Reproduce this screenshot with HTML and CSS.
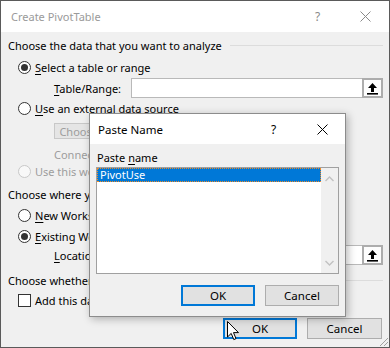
FILE: index.html
```html
<!DOCTYPE html>
<html>
	<head>
		<meta charset="utf-8">
		<title>Create PivotTable</title>
		<link rel="stylesheet" href="styles.css">
	</head>
	<body>
		<div class="window">
			<div class="titlebar">
				<span class="title">Create PivotTable</span>
				<span class="tb-help">?</span>
				<svg class="tb-close" width="11" height="11" viewBox="0 0 11 11"><path d="M0.5 0.5 L10.5 10.5 M10.5 0.5 L0.5 10.5" stroke="#8a8a8a" stroke-width="1"/></svg>
			</div>
			<div class="content">
				<div class="group-head first"><span>Choose the data that you want to analyze</span><i class="rule"></i></div>
				<div class="row radio-row r1"><span class="radio on"></span><span><u>S</u>elect a table or range</span></div>
				<div class="field-row"><span class="field-label"><span><u>T</u>able/Range:</span></span><span class="input"></span><span class="pick"><svg width="13" height="13" viewBox="0 0 13 13"><path d="M6.5 1 L11 6 H8 V10 H5 V6 H2 Z" fill="#000"/><rect x="1" y="11" width="11" height="1.6" fill="#000"/></svg></span></div>
				<div class="row radio-row r2"><span class="radio"></span><span><u>U</u>se an external data source</span></div>
				<div class="conn-btn">Choose Connection...</div>
				<div class="row sub disabled c1">Connection name:</div>
				<div class="row radio-row disabled r3"><span class="radio"></span><span>Use this workbook's Data Model</span></div>
				<div class="group-head g2"><span>Choose where you want the PivotTable report to be placed</span></div>
				<div class="row radio-row r4"><span class="radio"></span><span><u>N</u>ew Worksheet</span></div>
				<div class="row radio-row r5"><span class="radio on"></span><span><u>E</u>xisting Worksheet</span></div>
				<div class="field-row loc"><span class="field-label"><span><u>L</u>ocation:</span></span><span class="input"></span><span class="pick"><svg width="13" height="13" viewBox="0 0 13 13"><path d="M6.5 1 L11 6 H8 V10 H5 V6 H2 Z" fill="#000"/><rect x="1" y="11" width="11" height="1.6" fill="#000"/></svg></span></div>
				<div class="group-head g3"><span>Choose whether you want to analyze multiple tables</span><i class="rule"></i></div>
				<div class="row check-row"><span class="checkbox"></span><span>Add this data to the Data <u>M</u>odel</span></div>
				<div class="buttons">
					<span class="btn default">OK</span>
					<span class="btn">Cancel</span>
				</div>
			</div>
			<span class="grip"></span>
		</div>

		<div class="dialog">
			<div class="titlebar dlg-title">
				<span class="title active">Paste Name</span>
				<span class="tb-help active">?</span>
				<svg class="tb-close" width="11" height="11" viewBox="0 0 11 11"><path d="M0.5 0.5 L10.5 10.5 M10.5 0.5 L0.5 10.5" stroke="#000" stroke-width="1"/></svg>
			</div>
			<div class="dlg-body">
				<div class="dlg-label"><span>Paste <u>n</u>ame</span></div>
				<div class="listbox">
					<div class="items">
						<div class="item selected">PivotUse</div>
					</div>
					<div class="scroll">
						<svg width="9" height="6" viewBox="0 0 9 6"><path d="M0.5 5 L4.5 1 L8.5 5" fill="none" stroke="#c2c2c2" stroke-width="1.4"/></svg>
						<svg width="9" height="6" viewBox="0 0 9 6"><path d="M0.5 1 L4.5 5 L8.5 1" fill="none" stroke="#c2c2c2" stroke-width="1.4"/></svg>
					</div>
				</div>
				<div class="buttons dlg-buttons">
					<span class="btn default">OK</span>
					<span class="btn">Cancel</span>
				</div>
			</div>
		</div>

		<svg class="cursor" width="13" height="20" viewBox="0 0 13 20"><path d="M0.5 0.5 V16 L4.2 12.4 L6.8 18.6 L9 17.6 L6.5 11.6 H11.5 Z" fill="#fff" stroke="#000" stroke-width="1" stroke-linejoin="round"/></svg>
	</body>
</html>
```

FILE: styles.css
```css
body {
	margin: 0;
	font-family: "Noto Sans", sans-serif;
	font-size: 11px;
	color: #000;
	background: #f0f0f0;
}

u {
	text-decoration: underline;
	text-underline-offset: 2px;
}

.window {
	width: 388px;
	height: 346px;
	border: 1px solid #5a5a5a;
	background: #f0f0f0;
	display: flex;
	flex-direction: column;
	position: relative;
}

.titlebar {
	height: 31px;
	background: #fff;
	display: flex;
	align-items: center;
	flex: none;
}

.title {
	font-size: 11px;
	color: #9a9a9a;
	margin-left: 10px;
	flex: 1;
}

.tb-help {
	font-size: 12px;
	color: #8a8a8a;
	width: 12px;
}

.tb-close {
	margin-left: 33px;
	margin-right: 18px;
}

.title.active,
.tb-help.active {
	color: #000;
}

.content {
	padding: 0 6px 0 7px;
	display: flex;
	flex-direction: column;
}

.row,
.group-head {
	height: 16px;
	display: flex;
	align-items: center;
	white-space: nowrap;
}

.group-head .rule {
	flex: 1;
	height: 1px;
	background: #dcdcdc;
	margin-left: 8px;
}

.group-head.first { margin-top: 5px; }
.group-head.g2 { margin-top: 7px; }
.group-head.g3 { margin-top: 7px; }

.radio-row {
	padding-left: 10px;
}

.r1 { margin-top: 6px; }
.r2 { margin-top: 2px; }
.r3 { margin-top: 1px; }
.r4 { margin-top: 5px; }
.r5 { margin-top: 5px; }

.radio {
	width: 11px;
	height: 11px;
	border: 1px solid #333;
	border-radius: 50%;
	background: #fff;
	margin-right: 4px;
	display: flex;
	align-items: center;
	justify-content: center;
	flex: none;
}

.radio.on::after {
	content: "";
	width: 7px;
	height: 7px;
	border-radius: 50%;
	background: #333;
}

.disabled {
	color: #9d9d9d;
}

.disabled .radio {
	border-color: #c8c8c8;
	background: #f8f8f8;
}

.field-row {
	display: flex;
	align-items: stretch;
	height: 20px;
	margin-top: 3px;
	padding-left: 46px;
}

.field-row.loc {
	margin-top: 1px;
}

.field-label {
	width: 77px;
	display: flex;
	align-items: center;
	white-space: nowrap;
}

.input {
	flex: 1;
	background: #fff;
	border: 1px solid #b9b9b9;
	border-right: none;
}

.pick {
	width: 17px;
	border: 2px solid #adadad;
	background: #fdfdfd;
	display: flex;
	align-items: center;
	justify-content: center;
}

.conn-btn {
	margin-top: 7px;
	margin-left: 46px;
	width: 118px;
	height: 14px;
	border: 1px solid #c8c8c8;
	background: #e5e5e5;
	color: #9d9d9d;
	display: flex;
	align-items: center;
	justify-content: center;
	white-space: nowrap;
}

.sub {
	padding-left: 46px;
}

.c1 { margin-top: 7px; }

.check-row {
	margin-top: 4px;
	padding-left: 10px;
}

.checkbox {
	width: 11px;
	height: 11px;
	border: 1px solid #333;
	background: #fff;
	margin-right: 4px;
	flex: none;
}

.buttons {
	display: flex;
	justify-content: flex-end;
	gap: 10px;
	margin-top: 10px;
	margin-right: 1px;
}

.btn {
	width: 73px;
	height: 19px;
	border: 1px solid #adadad;
	background: #e1e1e1;
	display: flex;
	align-items: center;
	justify-content: center;
	font-size: 11.5px;
}

.btn.default {
	border: 2px solid #0078d7;
	width: 70px;
	height: 17px;
}

.grip {
	position: absolute;
	right: 1px;
	bottom: 1px;
	width: 10px;
	height: 10px;
	background: linear-gradient(135deg, transparent 55%, #a0a0a0 55%, #a0a0a0 62%, transparent 62%, transparent 75%, #a0a0a0 75%, #a0a0a0 82%, transparent 82%);
}

.dialog {
	position: absolute;
	left: 89px;
	top: 113px;
	width: 255px;
	height: 202px;
	border: 1px solid #8c8c8c;
	background: #f0f0f0;
	box-shadow: 2px 2px 8px rgba(0, 0, 0, 0.28);
}

.dlg-title {
	height: 30px;
}

.dlg-title .title {
	margin-left: 8px;
	font-size: 11.5px;
}

.dlg-title .tb-close {
	margin-left: 34px;
	margin-right: 17px;
}

.dlg-body {
	padding: 5px 6px 0 6px;
	display: flex;
	flex-direction: column;
}

.dlg-label {
	height: 16px;
	display: flex;
	align-items: center;
	padding-left: 1px;
}

.listbox {
	margin-top: 2px;
	height: 105px;
	border: 1px solid #a0a0a0;
	background: #fff;
	display: flex;
}

.items {
	flex: 1;
}

.item {
	height: 14px;
	line-height: 14px;
	padding-left: 3px;
}

.item.selected {
	background: #0078d7;
	color: #fff;
	outline: 1px dotted #f08a24;
	outline-offset: -1px;
}

.scroll {
	width: 17px;
	background: #f0f0f0;
	display: flex;
	flex-direction: column;
	justify-content: space-between;
	align-items: center;
	padding: 8px 0 7px;
}

.dlg-buttons {
	margin-top: 11px;
	margin-right: 0;
}

.dlg-buttons .btn {
	width: 72px;
}

.dlg-buttons .btn.default {
	width: 70px;
}

.cursor {
	position: absolute;
	left: 227px;
	top: 321px;
}
```
